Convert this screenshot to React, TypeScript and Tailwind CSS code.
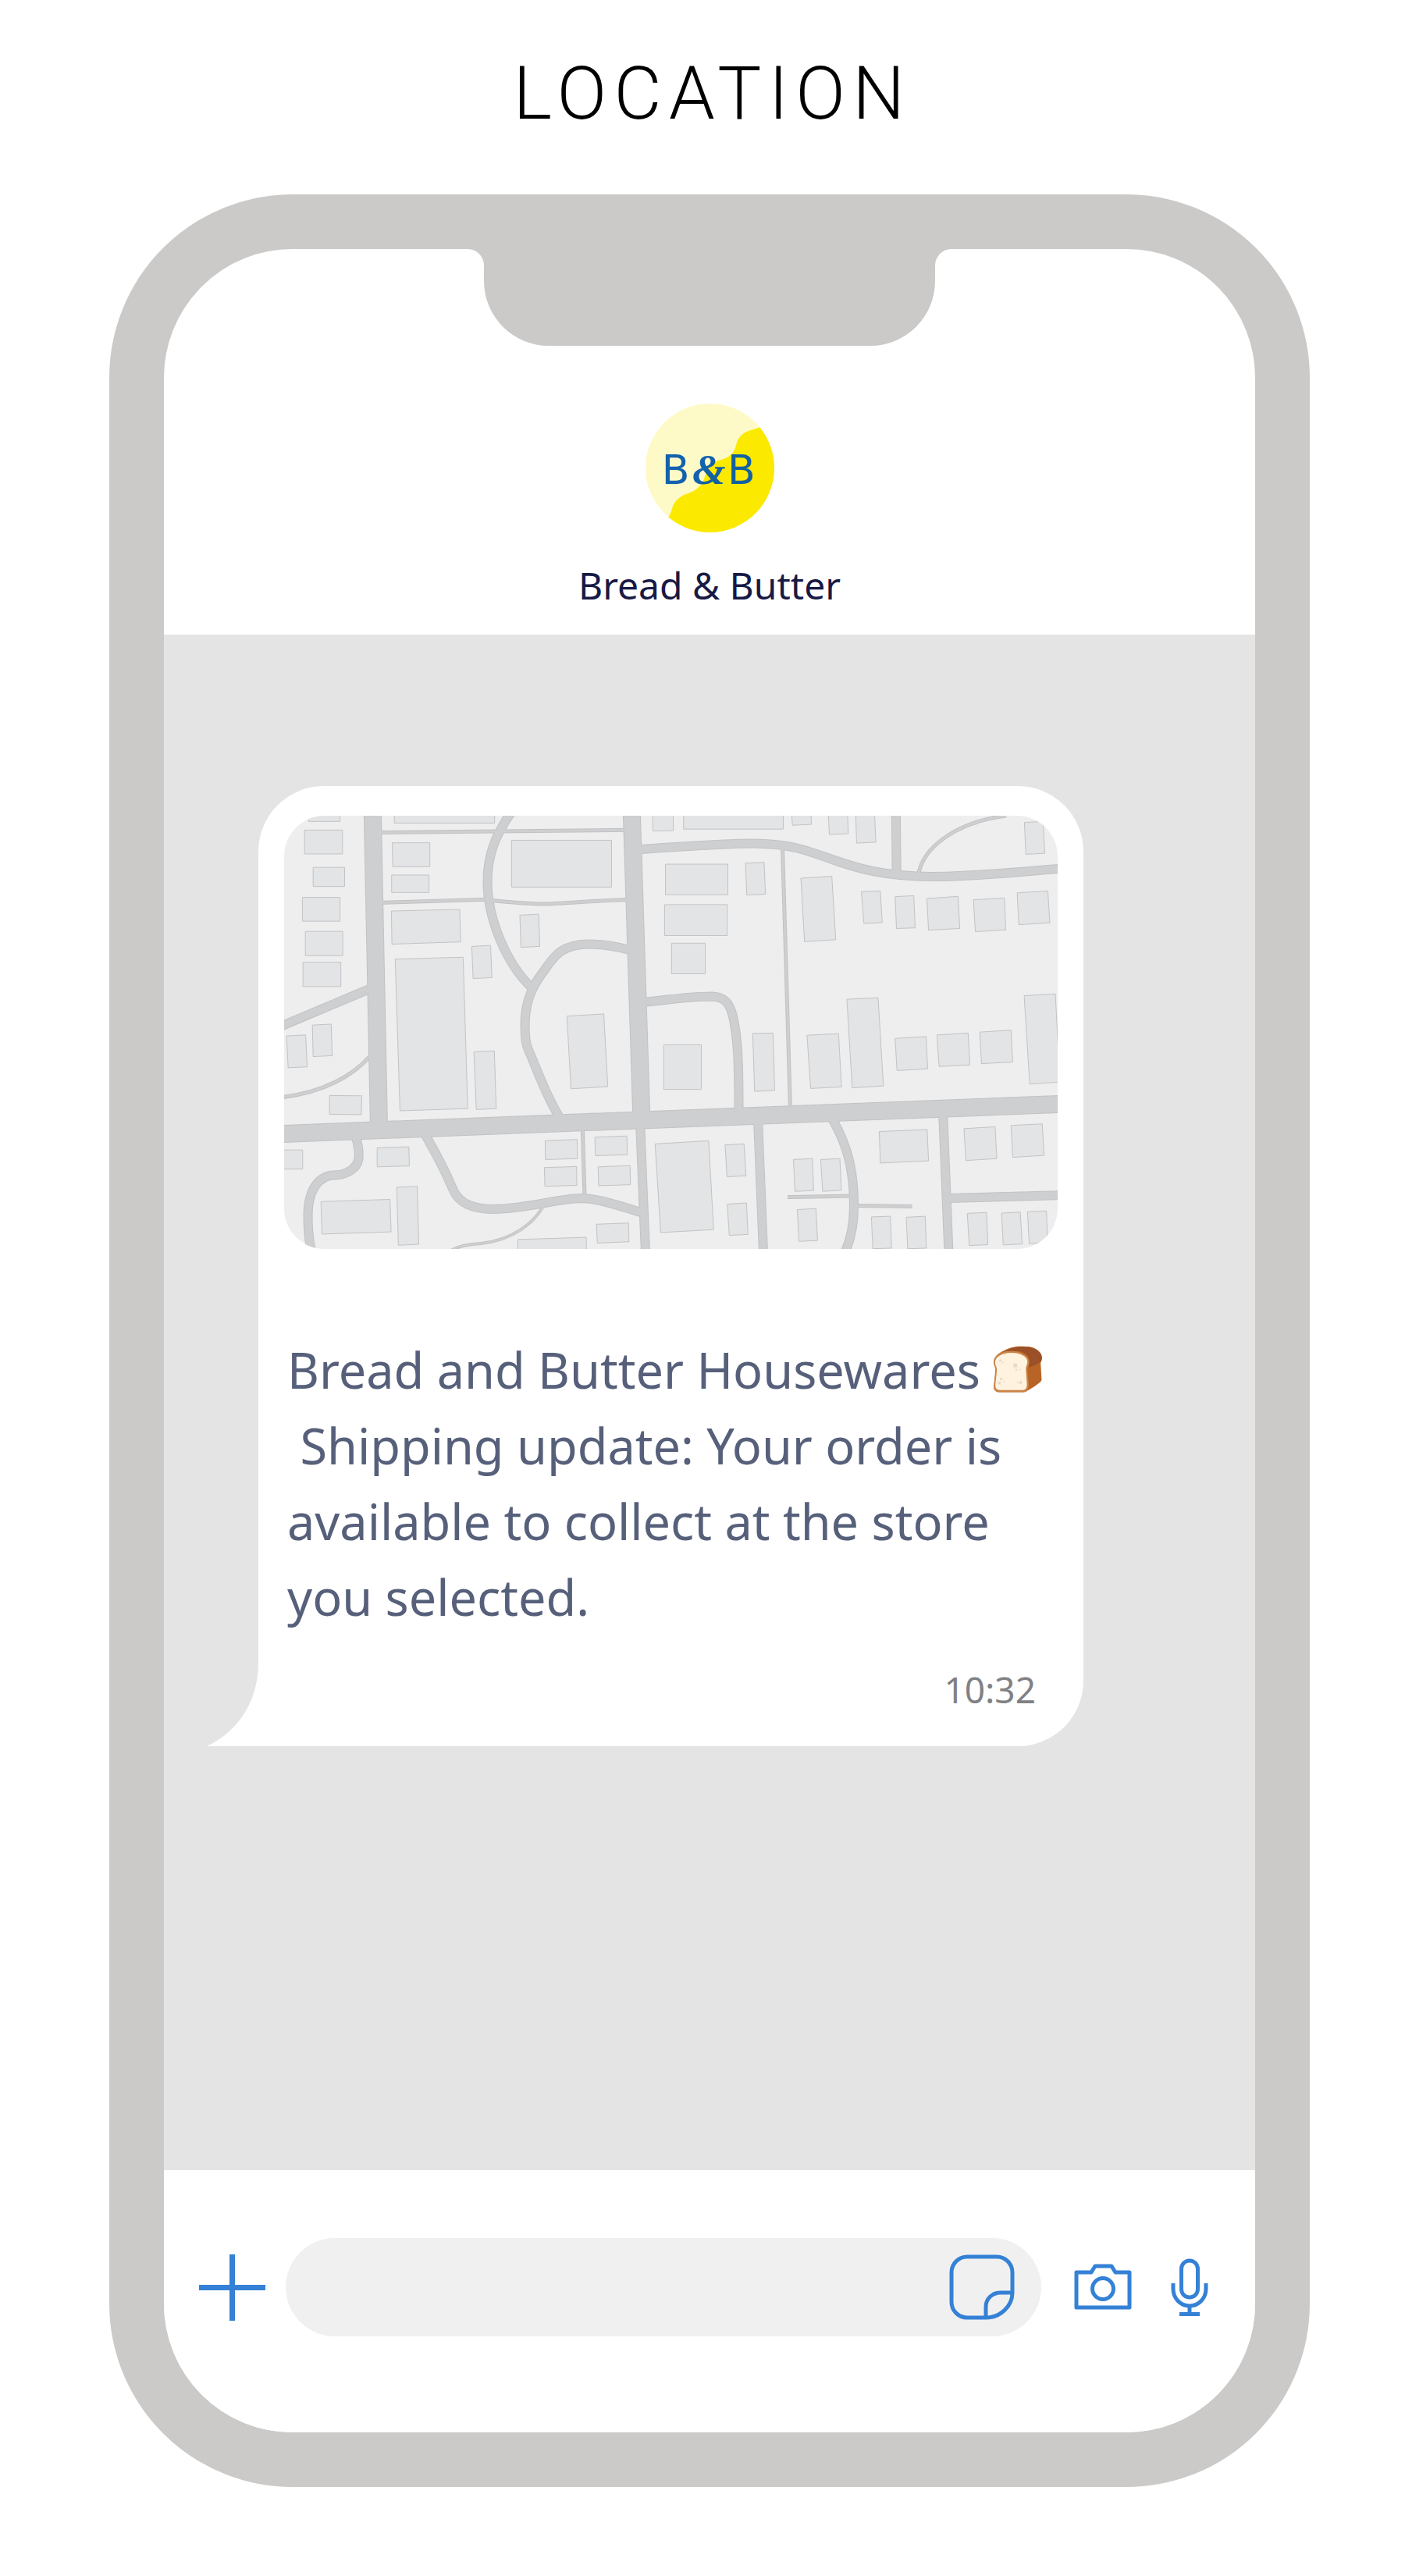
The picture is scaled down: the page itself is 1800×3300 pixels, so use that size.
import React from "react";

const majorRoads = [
  { d: "M-5 407.6 L996 369.3", w: 23 },
  { d: "M113.3 -5 L121.5 400", w: 23 },
  { d: "M445.3 -5 L458 392", w: 23 },
  { d: "M456 392 L463 560", w: 12 },
  { d: "M607 388 L614 560", w: 12 },
  { d: "M844 378 L851.5 560", w: 12 },
  { d: "M850 490 L996 486", w: 12 },
  { d: "M783.8 -5 L784.7 76", w: 12 },
  { d: "M457 43 C520 39 560 35.5 600 35.5 C650 36 665 43 705 57 C735 67.5 770 78 830 78 C885 78 940 72 996 67.5", w: 12 },
  { d: "M464 238.5 C500 235 520 231.5 548 231.5 C566 232 571 242 575 257 C581 284 582.5 310 582.5 376", w: 12 },
  { d: "M290 -3 C270 26 260.5 52 260.5 84 C260.5 132 285 190 317 220", w: 12 },
  { d: "M441 171.5 C420 166 400 164.5 389 164.5 C350 165 343 186 329 204 C314 224 308.5 245 308.5 268 C309 290 310 294 316 307 C327 333 337 361 352 385", w: 12 },
  { d: "M-5 270 L108 222.5", w: 12 },
  { d: "M92 412 C96 425 96 433 95.5 439 C94 452 80 460 64 460.5 C44 461 30.5 480 30.5 512 C30.5 530 32 545 35 558", w: 12 },
  { d: "M181 409 C196 435 205 452 217 480 C224 496 242 504 268 504 C315 503 350 490 383 490 C405 491 430 500 457 508", w: 12 },
  { d: "M702 388 C722 422 730 455 730 500 C730 522 727 540 719 558", w: 12 },
  { d: "M638.5 40 L648.5 376", w: 5 },
  { d: "M120 21.6 L440 18.3", w: 5 },
  { d: "M120 111.6 L262 107.3", w: 5 },
  { d: "M262 108 C290 111 315 113 336 113 C365 112 400 108.5 442 107.4", w: 5 },
  { d: "M-5 361 C45 355 85 337 112 306", w: 5 },
  { d: "M382.3 400 L385 488", w: 5 },
  { d: "M331 502 C320 520 296 543 252 548 C236 549 225 551 215 556", w: 4 },
  { d: "M645 488.6 L728 487", w: 5 },
  { d: "M732 499.6 L804.5 500.4", w: 5 },
  { d: "M812.5 76 C818 40 862 8 925 0", w: 5 },
];

const westBuildings = [
  "219,120 336,120 336,153 219,153",
  "204,180 345,180 345,255 204,255",
  "236,297 353,297 353,357 236,357",
  "196,391 336,391 336,466 196,466",
  "207,498 346,498 346,574 207,574",
  "198,595 339,595 339,671 198,671",
  "538,120 911,120 911,158 538,158",
  "530,220 670,220 670,295 532,295",
  "528,321 667,321 667,376 528,376",
  "974,212 1346,212 1346,359 974,359",
  "297,1013 417,1014 415,1073 297,1072",
  "110,1184 197,1184 197,1244 110,1244",
  "527,434 781,429 785,531 529,538",
  "541,585 794,579 811,1054 559,1061",
  "826,545 896,542 901,643 831,646",
  "1005,447 1075,444 1079,545 1009,548",
  "137,826 208,823 214,923 143,926",
  "233,792 303,789 307,888 236,891",
  "834,876 910,873 917,1054 843,1057",
  "1180,764 1317,757 1332,985 1195,992",
  "474,1177 592,1174 594,1234 474,1237",
  "265,1346 522,1339 526,1441 269,1448",
  "547,1301 623,1298 629,1480 553,1483",
  "1099,1155 1218,1151 1219,1211 1100,1214",
  "1096,1239 1216,1236 1217,1295 1098,1298",
  "1284,1144 1403,1140 1405,1199 1286,1202",
  "1296,1237 1415,1233 1416,1293 1298,1296",
  "1290,1417 1409,1413 1411,1472 1293,1476",
  "997,1465 1252,1458 1253,1505 997,1505",
];

const eastBuildings = [
  "-11,120 63,120 63,182 -10,183",
  "100,120 458,120 458,177 100,177",
  "487,120 557,120 559,162 491,165",
  "619,120 688,120 691,191 623,194",
  "717,120 785,120 790,218 721,221",
  "35,287 259,287 259,383 35,383",
  "32,414 257,414 257,511 32,511",
  "57,535 178,535 178,631 57,631",
  "322,284 389,281 394,381 327,384",
  "521,331 632,325 646,524 534,530",
  "738,373 806,371 813,470 747,473",
  "859,389 926,386 931,487 864,489",
  "973,395 1085,388 1091,489 979,494",
  "1140,399 1251,393 1256,493 1147,499",
  "1297,377 1407,371 1414,471 1303,477",
  "1323,156 1390,153 1396,253 1328,256",
  "29,854 164,854 164,994 29,994",
  "348,818 421,817 427,997 355,1000",
  "543,824 656,819 667,986 556,991",
  "686,711 798,706 817,983 705,989",
  "859,834 970,828 976,929 866,935",
  "1009,823 1121,817 1127,917 1017,922",
  "1163,814 1275,808 1281,908 1169,913",
  "1322,700 1434,694 1450,971 1342,977",
  "-2,1165 190,1155 208,1434 18,1443",
  "249,1168 317,1165 324,1265 256,1268",
  "257,1354 326,1350 331,1449 264,1452",
  "494,1214 562,1211 567,1311 500,1314",
  "592,1214 661,1211 666,1310 599,1314",
  "508,1371 575,1368 581,1468 514,1471",
  "802,1126 974,1120 979,1218 806,1225",
  "774,1394 842,1392 846,1492 779,1494",
  "899,1395 967,1392 971,1492 904,1494",
  "1106,1117 1218,1111 1224,1211 1113,1217",
  "1275,1107 1387,1102 1393,1201 1281,1207",
  "1118,1383 1187,1380 1192,1481 1125,1484",
  "1241,1382 1308,1379 1315,1479 1247,1482",
  "1334,1378 1402,1375 1406,1474 1340,1478",
];

function Buildings({ shapes, transform }: { shapes: string[]; transform: string }) {
  return (
    <g transform={transform} fill="#e2e4e6" stroke="#c2c3c5">
      {shapes.map((points) => (
        <polygon key={points} points={points} vectorEffect="non-scaling-stroke" />
      ))}
    </g>
  );
}

function StoreMap() {
  return (
    <svg
      viewBox="0 0 991 555"
      role="img"
      aria-label="Map of the store location"
      className="block w-full rounded-[52px] bg-[#eeeeee]"
    >
      <g fill="none" stroke="#c1c2c4">
        {majorRoads.map((r) => (
          <path key={r.d} d={r.d} strokeWidth={r.w} />
        ))}
      </g>
      <g fill="none" stroke="#cecfd1">
        {majorRoads.map((r) => (
          <path key={r.d} d={r.d} strokeWidth={r.w - 2} />
        ))}
      </g>
      <Buildings shapes={westBuildings} transform="scale(0.3444 0.4082) translate(-128 -135)" />
      <Buildings shapes={eastBuildings} transform="translate(476 0) scale(0.3571 0.4082) translate(0 -135)" />
    </svg>
  );
}

function BrandLogo() {
  return (
    <svg viewBox="382 112 494 494" role="img" aria-label="B&B" className="block size-[165px]">
      <defs>
        <clipPath id="disc">
          <circle cx="629" cy="359" r="247" />
        </clipPath>
      </defs>
      <circle cx="629" cy="359" r="247" fill="#fefac8" />
      <path
        clipPath="url(#disc)"
        fill="#fbe900"
        d="M840 190 C812 212 795 208 765 222 C722 248 738 275 715 302 C696 328 668 322 640 341 C608 363 616 398 595 421 C570 456 543 453 523 466 C475 494 492 520 466 554 L480 640 H900 V190Z"
      />
      <g fill="#0056ac" opacity="0.92" fontFamily="'DejaVu Sans', sans-serif" fontSize="156">
        <text x="444" y="420">B</text>
        <text x="562" y="420" fontFamily="'Liberation Serif', serif" fontStyle="italic" fontWeight="700" fontSize="164">&amp;</text>
        <text x="696" y="420">B</text>
      </g>
    </svg>
  );
}

function BreadIcon() {
  return (
    <svg viewBox="144 102 192 184" role="img" aria-label="bread" className="inline-block h-[61px] w-16 align-[-6px]">
      <path d="M147 166 C146 140 176 124 206 112 C236 101 262 104 285 106 C312 110 334 128 333 150 C332 160 330 164 328 168 L332 234 C330 244 300 262 270 280 H168 C152 280 147 270 147 262 L154 192 C153 182 147 178 147 166Z" fill="#b76426" />
      <path d="M170 138 C190 120 225 104 262 105 C305 106 335 126 333 150 C332 162 326 170 282 186 C285 160 290 140 250 124 C220 120 190 124 170 138Z" fill="#9c5027" />
      <path d="M147 166 C146 138 176 122 212 122 C252 122 284 138 284 164 C284 178 277 182 277 196 L282 250 C282 268 276 282 262 282 H168 C152 282 147 272 147 258 L154 196 C154 184 147 180 147 166Z" fill="#cb8448" />
      <path d="M152 166 C152 144 180 129 214 129 C250 129 278 144 277 164 C276 178 271 180 271 196 L275 250 C275 266 270 273 258 273 H172 C158 273 153 266 153 254 L159 196 C159 182 152 178 152 166Z" fill="#fff3e0" />
      <g fill="#e8d9c9">
        <circle cx="173" cy="159" r="5" />
        <circle cx="183" cy="167" r="3" />
        <circle cx="174" cy="171" r="2" />
        <circle cx="230" cy="178" r="8" />
        <circle cx="240" cy="187" r="2" />
        <circle cx="234" cy="195" r="4" />
        <circle cx="249" cy="195" r="3" />
        <circle cx="176" cy="230" r="5" />
        <circle cx="168" cy="246" r="6" />
        <circle cx="186" cy="241" r="3" />
        <circle cx="251" cy="244" r="6" />
        <circle cx="239" cy="245" r="3" />
      </g>
    </svg>
  );
}

function Notch() {
  return (
    <div className="flex items-start justify-center">
      <div className="size-[21px] bg-[#cbcac8]">
        <div className="size-full rounded-tr-full bg-white" />
      </div>
      <div className="h-[124px] w-[578px] rounded-b-[83px] bg-[#cbcac8]" />
      <div className="size-[21px] bg-[#cbcac8]">
        <div className="size-full rounded-tl-full bg-white" />
      </div>
    </div>
  );
}

function Message() {
  return (
    <article className="relative rounded-[84px] rounded-bl-none bg-white px-[33px] pt-[38px] pb-[46px]">
      <svg viewBox="0 0 67 107" className="absolute right-full bottom-0 -mr-px h-[107px] w-[67px]" aria-hidden="true">
        <path d="M66 0 C66 46 43 87 0 107 H67 V0Z" fill="#fff" />
      </svg>
      <StoreMap />
      <p className="mt-[106px] pl-1 text-[63px] leading-[97px] whitespace-nowrap text-[#57607a]">
        Bread and Butter Housewares <BreadIcon />
        <br />
        &nbsp;Shipping update: Your order is
        <br />
        available to collect at the store
        <br />
        you selected.
      </p>
      <time className="mt-[43px] mr-7 block text-right text-[46px] leading-[54px] text-[#808184]">10:32</time>
    </article>
  );
}

function Composer() {
  return (
    <form
      className="flex items-center bg-white pt-[87px] pr-[60px] pb-[123px] pl-[45px] text-[#3481d6]"
      onSubmit={(e) => e.preventDefault()}
    >
      <button type="button" aria-label="Add attachment" className="shrink-0">
        <svg viewBox="0 0 85 85" className="block size-[85px]" stroke="currentColor" strokeWidth="7">
          <path d="M0 42.5 H85 M42.5 0 V85" />
        </svg>
      </button>
      <div className="ml-[26px] flex h-[126px] min-w-0 flex-1 items-center rounded-full bg-[#f0f0f0] pr-[34px] pl-12">
        <input aria-label="Message" className="min-w-0 flex-1 bg-transparent text-[46px] text-[#57607a] outline-none" />
        <button type="button" aria-label="Stickers" className="shrink-0">
          <svg viewBox="0 0 84 84" className="block size-[84px]" fill="none" stroke="currentColor" strokeWidth="5">
            <path d="M81 49 V23 C81 12 72 3 61 3 H23 C12 3 3 12 3 23 V61 C3 72 12 81 23 81 H47 C66 81 81 66 81 49 H66 C55 49 47 57 47 67 V81" />
          </svg>
        </button>
      </div>
      <button type="button" aria-label="Camera" className="ml-[42px] shrink-0">
        <svg viewBox="0 0 74 60" className="block h-[60px] w-[74px]" fill="none" stroke="currentColor" strokeWidth="5" strokeLinejoin="round">
          <path d="M3 11 H22 L27 3 H48 L53 11 H71 V56 H3Z" />
          <circle cx="37" cy="32" r="13.5" />
        </svg>
      </button>
      <button type="button" aria-label="Record voice message" className="ml-[50px] shrink-0">
        <svg viewBox="0 0 48 74" className="block h-[74px] w-12" fill="none" stroke="currentColor" strokeWidth="5">
          <rect x="13.5" y="3" width="21" height="47" rx="10.5" />
          <path d="M3 32 V39 C3 51 12 61 24 61 C36 61 45 51 45 39 V32 M24 61 V71 M11 71.5 H37" />
        </svg>
      </button>
    </form>
  );
}

export default function App() {
  return (
    <div className="min-h-screen bg-white pr-[122px] pb-[112px] pl-[140px] font-['Noto_Sans',sans-serif]">
      <h1 className="pt-16 pl-2 text-center font-['Roboto',sans-serif] text-[94px] leading-[112px] font-light tracking-widest text-black">
        LOCATION
      </h1>
      <main className="mt-[73px] overflow-hidden rounded-[235px] border-[70px] border-[#cbcac8] bg-white">
        <header className="flex flex-col items-center pb-[28px]">
          <Notch />
          <div className="mt-[74px]">
            <BrandLogo />
          </div>
          <h2 className="mt-[33px] text-[48px] leading-[70px] text-[#171a45]">Bread &amp; Butter</h2>
        </header>
        <section aria-label="Conversation" className="bg-[#e4e4e4] pt-[194px] pr-[220px] pb-[543px] pl-[121px]">
          <Message />
        </section>
        <Composer />
      </main>
    </div>
  );
}
